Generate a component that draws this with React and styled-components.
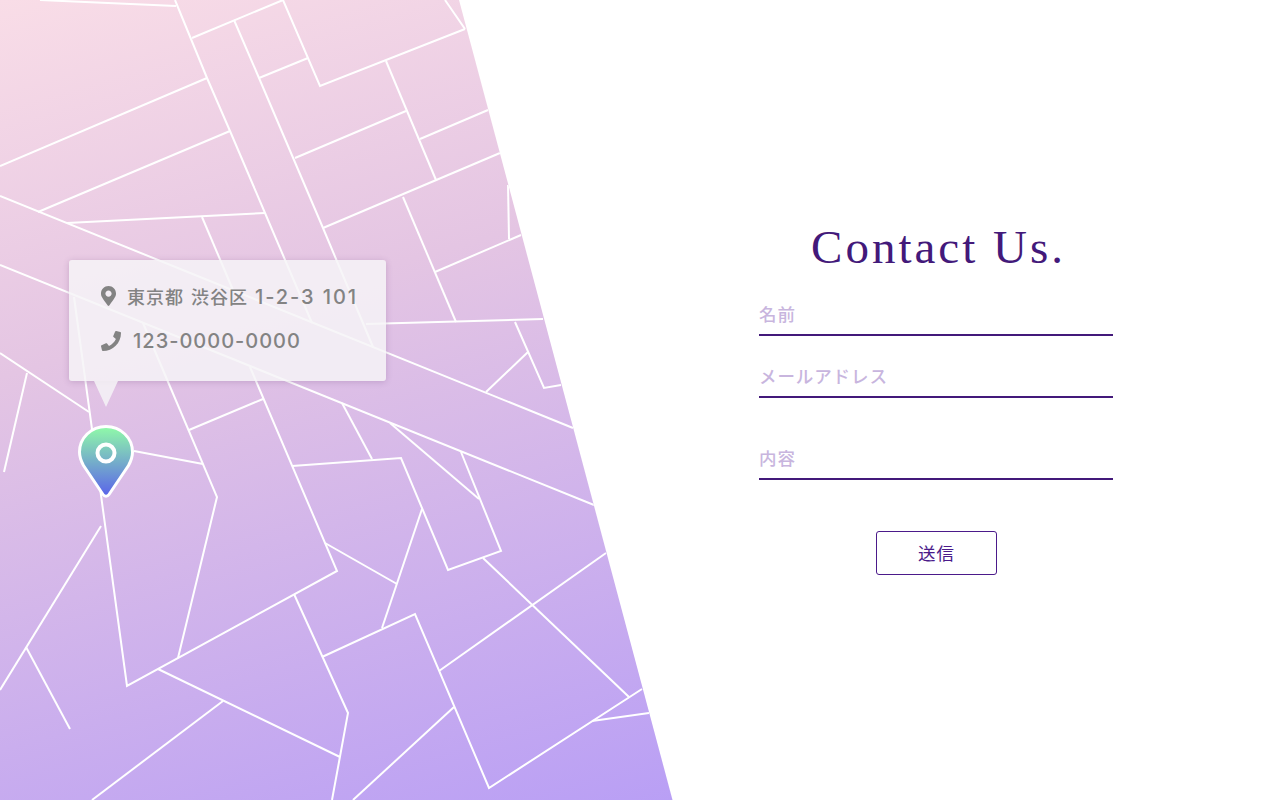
import React from "react";
import styled, { createGlobalStyle } from "styled-components";
import { FaMapMarkerAlt, FaPhone } from "react-icons/fa";

const Global = createGlobalStyle`
  html, body { margin: 0; padding: 0; background: #fff; }
  * { box-sizing: border-box; }
`;

const Page = styled.main`
  display: flex;
  width: 1280px;
  height: 800px;
  overflow: hidden;
  font-family: "Noto Sans CJK JP", "Liberation Sans", sans-serif;
`;

const MapPanel = styled.section`
  position: relative;
  flex: 0 0 673px;
  height: 800px;
  background: linear-gradient(164deg, #f9dde7 0%, #e4c5e3 38%, #b99ff5 100%);
  clip-path: polygon(0 0, 459px 0, 672.5px 800px, 0 800px);
`;

const Roads = styled.svg`
  position: absolute;
  inset: 0;
  width: 673px;
  height: 800px;
`;

const Road = styled.polyline`
  fill: none;
  stroke: #fff;
  stroke-width: 2;
  stroke-linejoin: miter;
`;

const Bubble = styled.div`
  position: absolute;
  left: 69px;
  top: 260px;
  width: 317px;
  height: 121px;
  padding: 21px 0 0 32px;
  display: flex;
  flex-direction: column;
  gap: 15px;
  background: rgba(246, 244, 247, 0.84);
  border-radius: 3px;
  box-shadow: 0 1px 6px rgba(90, 50, 110, 0.22);
  color: #838383;
  &::after {
    content: "";
    position: absolute;
    left: 25px;
    top: 121px;
    width: 24px;
    height: 26px;
    background: rgba(246, 244, 247, 0.84);
    clip-path: polygon(0 0, 100% 0, 50% 100%);
  }
`;

const InfoRow = styled.div`
  display: flex;
  align-items: center;
  height: 30px;
  gap: ${(p) => p.$gap}px;
  font-family: "Noto Sans CJK JP", sans-serif;
  font-size: 18px;
  font-weight: 500;
  letter-spacing: 1px;
  word-spacing: 2px;
  white-space: nowrap;
  svg { flex: none; }
`;

const Digits = styled.span`
  font-family: "Inter", sans-serif;
  font-size: 20px;
  letter-spacing: ${(p) => p.$track}px;
  word-spacing: 0;
`;

const PlaceIcon = styled(FaMapMarkerAlt)`
  width: 15px;
  height: 20px;
`;

const PhoneIcon = styled(FaPhone)`
  width: 20px;
  height: 20px;
`;

const Pin = styled.svg`
  position: absolute;
  left: 76px;
  top: 423px;
  width: 60px;
  height: 77px;
`;

const FormPanel = styled.section`
  flex: 1;
  padding: 224px 81px 0 0;
  display: flex;
  justify-content: center;
`;

const Form = styled.form`
  width: 354px;
  display: flex;
  flex-direction: column;
  align-items: center;
`;

const Title = styled.h1`
  margin: 0 0 28px;
  padding-left: 5px;
  font-family: "Liberation Serif", serif;
  font-weight: 400;
  font-size: 47px;
  line-height: 46px;
  letter-spacing: 3px;
  color: #43197a;
  white-space: nowrap;
`;

const Field = styled.input`
  display: block;
  width: 100%;
  height: 38px;
  margin-top: ${(p) => p.$top}px;
  padding: 0 0 5px;
  border: 0;
  border-bottom: 2px solid #43197a;
  border-radius: 0;
  outline: 0;
  background: transparent;
  font-family: inherit;
  font-size: 17.5px;
  font-weight: 500;
  letter-spacing: 0.9px;
  color: #43197a;
  &::placeholder { color: #c8b5de; opacity: 1; }
`;

const Submit = styled.button`
  width: 121px;
  height: 44px;
  margin-top: 51px;
  padding: 0 0 2px 1px;
  border: 1px solid #4b1a8a;
  border-radius: 3px;
  background: #fff;
  font-family: inherit;
  font-size: 17.5px;
  letter-spacing: 1px;
  color: #4b1a8a;
`;

const roads = [
  "40,0 176,6",
  "175,0 207,78 230,131 265,213 312,323",
  "192,38 283,0",
  "234,20 259,78 323,228 373,347",
  "283,0 320,86 465,29",
  "259,78 308,58",
  "445,0 465,29",
  "386,61 436,180",
  "295,158 406,111",
  "420,139 488,110",
  "323,228 500,153",
  "403,197 456,322",
  "435,272 521,235",
  "508,185 509,239",
  "0,166 207,78",
  "38,212 230,131",
  "0,196 573,428",
  "67,223 265,213",
  "202,217 233,290",
  "366,324 543,319",
  "515,322 544,388 561,385",
  "486,392 528,352",
  "0,353 89,412",
  "27,373 4,472",
  "74,297 127,686 337,571 250,367",
  "0,265 594,505",
  "143,323 217,497 178,658",
  "189,430 263,399",
  "134,451 203,464",
  "101,526 0,690",
  "26,647 70,729",
  "292,466 401,458 448,570 501,551 461,452",
  "342,403 372,459",
  "390,423 479,499",
  "325,543 397,584",
  "422,509 382,628",
  "294,594 348,713 332,800",
  "322,657 415,614 489,788 642,689",
  "439,671 606,553",
  "483,558 629,697",
  "592,721 649,713",
  "158,669 340,757",
  "223,701 92,800",
  "454,707 353,800",
];

export default function App() {
  return (
    <>
      <Global />
      <Page>
        <MapPanel>
          <Roads viewBox="0 0 673 800">
            {roads.map((points) => (
              <Road key={points} points={points} />
            ))}
          </Roads>
          <Bubble>
            <InfoRow $gap={11}>
              <PlaceIcon />
              <span>
                東京都 渋谷区 <Digits $track={1.9}>1-2-3 101</Digits>
              </span>
            </InfoRow>
            <InfoRow $gap={12}>
              <PhoneIcon />
              <Digits $track={1}>123-0000-0000</Digits>
            </InfoRow>
          </Bubble>
          <Pin viewBox="0 0 60 77">
            <defs>
              <linearGradient id="pinFill" x1="0" y1="0" x2="0" y2="1">
                <stop offset="0" stopColor="#90fba8" />
                <stop offset="1" stopColor="#5a63ea" />
              </linearGradient>
            </defs>
            <path
              d="M30 3.500C15 3.500 3.500 15 3.500 29c0 5 1.500 9 4 13.500L27 71.500c1.500 2.200 4.500 2.200 6 0l19.500-29c2.500-4.500 4-8.500 4-13.500C56.500 15 45 3.500 30 3.500Z"
              fill="url(#pinFill)"
              stroke="#fff"
              strokeWidth="3"
            />
            <circle cx="30" cy="30" r="8.500" fill="none" stroke="#fff" strokeWidth="4" />
          </Pin>
        </MapPanel>
        <FormPanel>
          <Form>
            <Title>Contact Us.</Title>
            <Field $top={0} placeholder="名前" />
            <Field $top={24} placeholder="メールアドレス" />
            <Field $top={44} placeholder="内容" />
            <Submit type="button">送信</Submit>
          </Form>
        </FormPanel>
      </Page>
    </>
  );
}
